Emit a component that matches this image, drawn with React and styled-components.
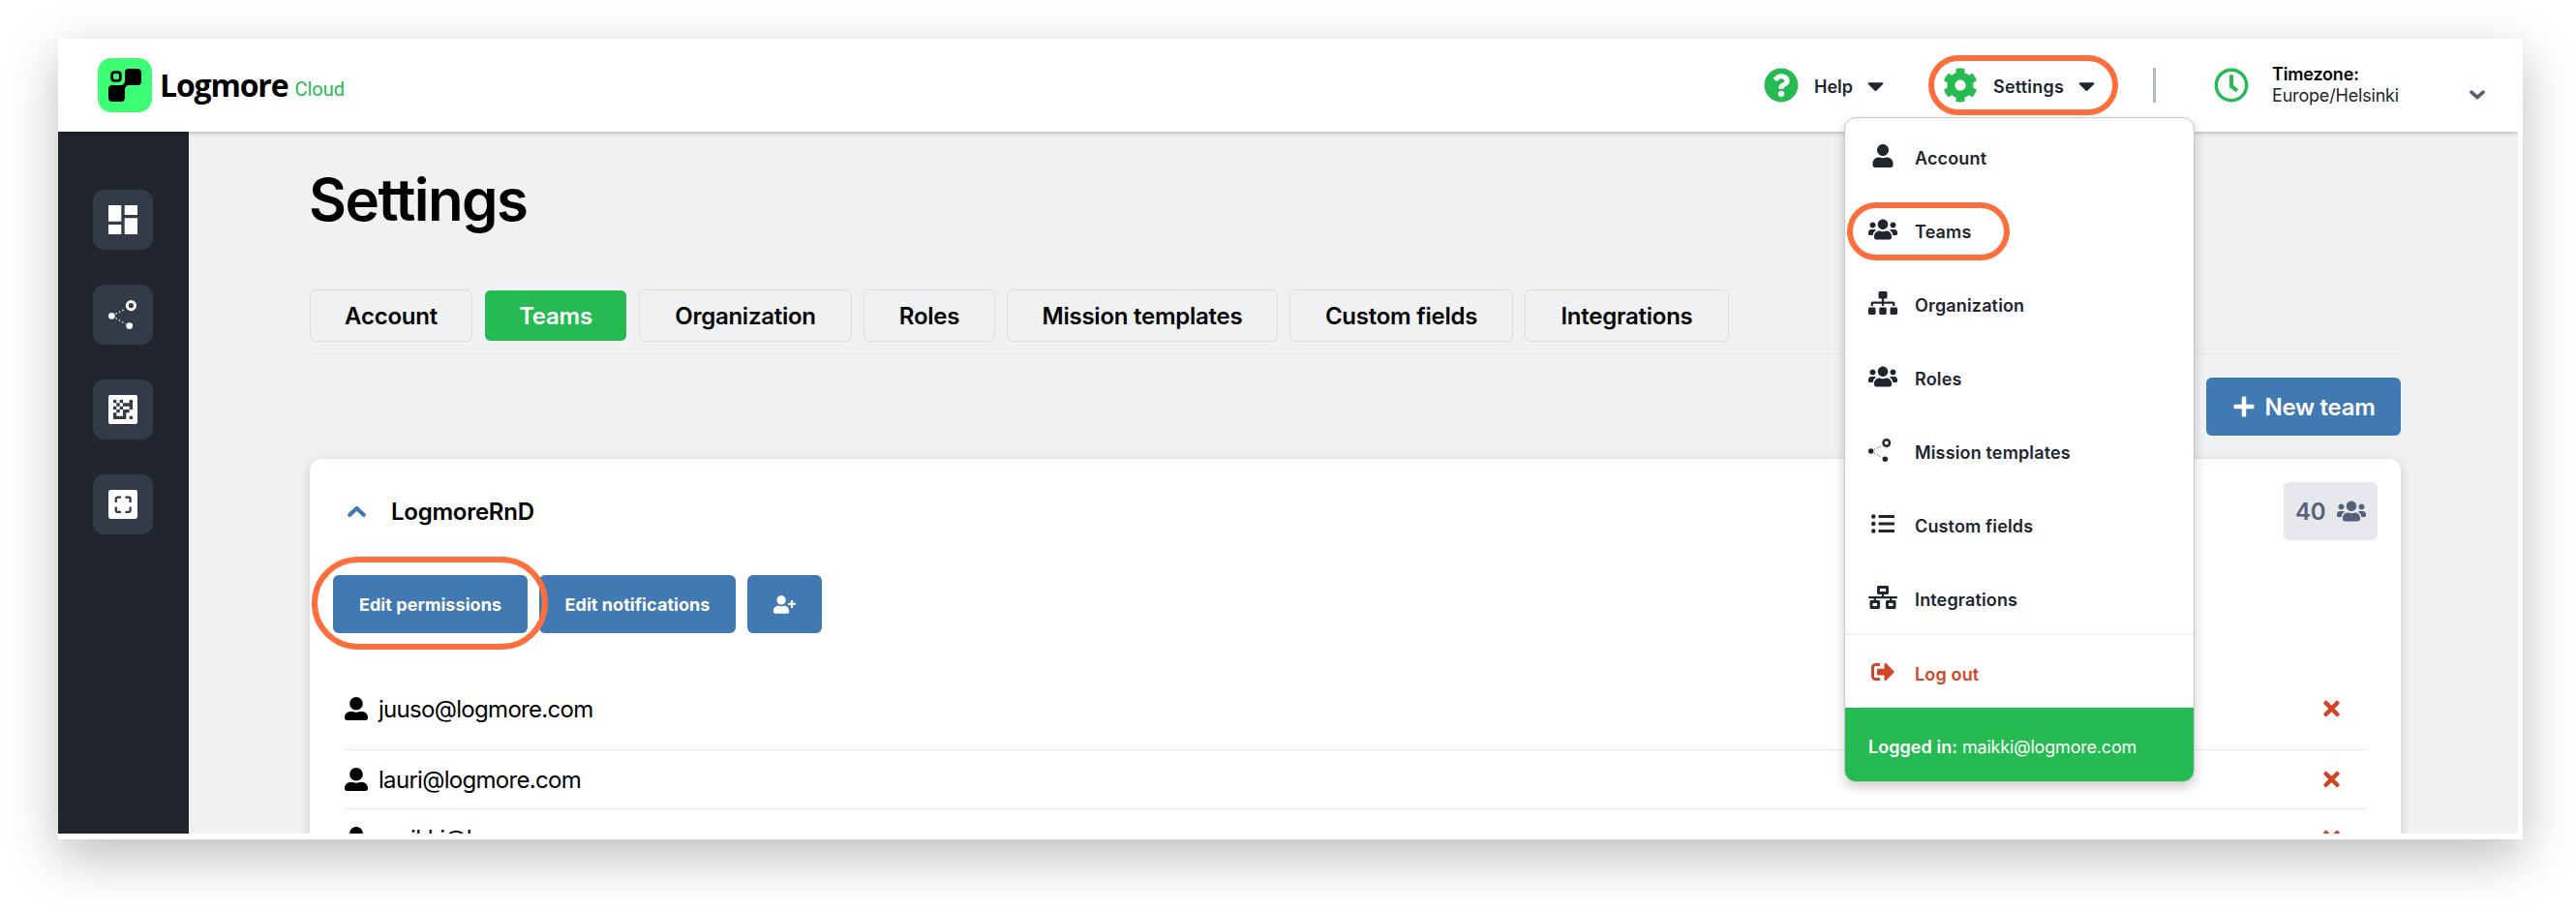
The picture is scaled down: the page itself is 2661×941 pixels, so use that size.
import React from 'react';
import styled, { createGlobalStyle } from 'styled-components';
import {
    FaCaretDown,
    FaCog,
    FaListUl,
    FaNetworkWired,
    FaPlus,
    FaQuestionCircle,
    FaRegClock,
    FaSignOutAlt,
    FaSitemap,
    FaTimes,
    FaUser,
    FaUserAlt,
    FaUserPlus,
    FaUsers,
} from 'react-icons/fa';

const GREEN = '#25ba52';
const BLUE = '#4179b3';
const DARK = '#20252e';
const RED = '#d14424';

const GlobalStyle = createGlobalStyle`
* { box-sizing: border-box; }
body {
    margin: 0;
    background: #fff;
    font-family: Inter, "Liberation Sans", sans-serif;
    color: #000;
}
svg { display: block; flex: none; }
`;

const Page = styled.div`
    width: 2661px;
    height: 941px;
    padding: 40px 55px 0 60px;
    overflow: hidden;
`;

const Frame = styled.div`
    height: 827px;
    padding: 0 5px 6px 0;
    background: #fff;
    box-shadow: 0 18px 50px rgba(0, 0, 0, 0.26);
`;

const Screen = styled.div`
    position: relative;
    display: flex;
    flex-direction: column;
    height: 821px;
    overflow: hidden;
`;

const Header = styled.header`
    position: relative;
    z-index: 1;
    display: flex;
    align-items: center;
    flex: none;
    height: 96px;
    padding: 0 34px 0 41px;
    background: #fff;
    box-shadow: 0 1px 5px rgba(0, 0, 0, 0.28);
`;

const Brand = styled.div`
    display: flex;
    align-items: baseline;
    margin-left: 8px;
    padding-bottom: 1px;
`;

const BrandName = styled.span`
    font: 700 32px/44px "Open Sans", sans-serif;
    letter-spacing: -1.17px;
`;

const BrandSuffix = styled.span`
    margin-left: 7px;
    font: 400 20px/24px Roboto, sans-serif;
    color: ${GREEN};
    transform: translateY(-1px);
`;

const HeaderNav = styled.nav`
    display: flex;
    align-items: center;
    height: 36px;
    margin-left: auto;
    color: ${DARK};
`;

const NavItem = styled.div`
    position: relative;
    display: flex;
    align-items: center;
    width: ${props => props.$width}px;
    height: 36px;
    font-size: 18px;
    font-weight: 600;
    letter-spacing: ${props => props.$spacing || 0}px;

    > svg:first-child {
        color: ${GREEN};
    }
`;

const NavLabel = styled.span`
    padding-top: 2px;
    margin: 0 10px 0 16px;
`;

const Divider = styled.div`
    width: 3px;
    height: 36px;
    margin-right: 60px;
    background: #b4b9c8;
`;

const Timezone = styled.div`
    width: 204px;
    margin-left: 25px;
    font-size: 18px;
    line-height: 22px;
    letter-spacing: -0.18px;

    strong {
        display: block;
        font-weight: 600;
        color: #000;
    }
`;

const ZoneChevron = styled.span`
    padding-top: 21px;
    color: #566179;
`;

const Body = styled.div`
    display: flex;
    flex: 1;
    min-height: 0;
`;

const Sidebar = styled.aside`
    display: flex;
    flex-direction: column;
    align-items: center;
    gap: 36px;
    width: 135px;
    padding: 60px 2px 0 0;
    background: ${DARK};
`;

const SideButton = styled.div`
    display: flex;
    align-items: center;
    justify-content: center;
    width: 62px;
    height: 62px;
    border-radius: 12px;
    background: #333a48;
    color: #fff;
`;

const Main = styled.main`
    flex: 1;
    padding: 34px 121px 0 125px;
    background: #f0f1f3;
`;

const Title = styled.h1`
    margin: 0 0 57px -1px;
    font-size: 60px;
    line-height: 72px;
    font-weight: 600;
    letter-spacing: -1.55px;
`;

const Tabs = styled.div`
    display: flex;
    gap: 12px;
    padding-bottom: 12px;
    border-bottom: 1px solid #e5e6ea;
`;

const Tab = styled.div`
    display: flex;
    align-items: center;
    justify-content: center;
    width: ${props => props.$width}px;
    height: 54px;
    border: 1px solid ${props => (props.$active ? '#f8f9fa' : '#dcdde0')};
    border-radius: 6px;
    background: ${props => (props.$active ? GREEN : 'transparent')};
    background-clip: padding-box;
    color: ${props => (props.$active ? '#fff' : '#000')};
    font-size: 24px;
    font-weight: 600;
    letter-spacing: -0.25px;
`;

const Actions = styled.div`
    display: flex;
    justify-content: flex-end;
    padding: 24px 0;
`;

const Button = styled.div`
    position: relative;
    display: flex;
    align-items: center;
    justify-content: center;
    gap: 10px;
    width: ${props => props.$width}px;
    height: 60px;
    border-radius: 6px;
    background: ${BLUE};
    color: #fff;
    font-size: ${props => (props.$large ? 24 : 18)}px;
    font-weight: ${props => (props.$large ? 600 : 700)};
    letter-spacing: ${props => (props.$large ? -0.3 : 0.06)}px;
`;

const Card = styled.section`
    padding: 24px 24px 0;
    border-radius: 12px;
    background: #fff;
    box-shadow: 0 3px 12px rgba(0, 0, 0, 0.16);
`;

const CardHeader = styled.div`
    display: flex;
    align-items: center;
    height: 60px;
    padding-left: 15px;
    color: ${BLUE};
`;

const TeamName = styled.h2`
    margin: 0 0 0 26px;
    font-size: 24px;
    font-weight: 600;
    letter-spacing: -0.25px;
    color: #000;
`;

const MemberCount = styled.div`
    display: flex;
    align-items: center;
    justify-content: space-between;
    width: 97px;
    height: 60px;
    margin-left: auto;
    padding: 0 12px;
    border-radius: 6px;
    background: #e6e8ee;
    color: #566179;
    font-size: 24px;
    font-weight: 600;
    letter-spacing: -0.2px;
`;

const TeamActions = styled.div`
    display: flex;
    gap: 12px;
    margin: 36px 0;
`;

const MemberList = styled.div`
    padding: 0 12px;
`;

const Member = styled.div`
    display: flex;
    align-items: center;
    gap: 11px;
    height: ${props => (props.$first ? 85 : 61)}px;
    padding-right: 27px;
    border-bottom: 1px solid #e6e8ee;
    font-size: 24px;
    letter-spacing: -0.7px;
`;

const RemoveIcon = styled(FaTimes)`
    margin-left: auto;
    width: 17px;
    height: 24px;
    color: ${RED};
`;

const Menu = styled.div`
    position: absolute;
    z-index: 2;
    top: 81px;
    left: 1845px;
    width: 362px;
    height: 687px;
    border: 1px solid #c5c6c9;
    border-radius: 12px;
    background: #fff;
    box-shadow: 0 5px 12px rgba(0, 0, 0, 0.2);
    overflow: hidden;
`;

const MenuItem = styled.div`
    position: relative;
    display: flex;
    align-items: center;
    gap: 18px;
    height: ${props => (props.$danger ? 77 : 76)}px;
    padding-left: 24px;
    border-top: ${props => (props.$danger ? '2px solid #f0f1f4' : 'none')};
    color: ${props => (props.$danger ? RED : DARK)};
    font-size: 18px;
    font-weight: 600;
    letter-spacing: 0.15px;
`;

const MenuIcon = styled.span`
    display: flex;
    justify-content: ${props => (props.$left ? 'flex-start' : 'center')};
    width: 30px;
    padding-top: 1px;
`;

const MenuLabel = styled.span`
    padding-top: 6px;
`;

const MenuFooter = styled.div`
    height: 78px;
    padding: 30px 24px 0;
    background: ${GREEN};
    color: #fff;
    font-size: 18px;
    line-height: 22px;
    letter-spacing: -0.18px;

    strong {
        font-weight: 600;
        letter-spacing: 0.05px;
    }
`;

// Orange outline that calls out a control
const Highlight = styled.span`
    position: absolute;
    z-index: 3;
    left: ${props => props.$left}px;
    top: ${props => props.$top}px;
    width: ${props => props.$width}px;
    height: ${props => props.$height}px;
    border: 6px solid #ff6f3d;
    border-radius: 48px;
`;

const LogoIcon = () => (
    <svg width="56" height="56" viewBox="0 0 56 56">
        <rect width="56" height="56" rx="14" fill="#3dff76" />
        <rect x="14.7" y="14.7" width="8.6" height="8.6" rx="2.6" fill="none" stroke="#000" strokeWidth="2.8" />
        <path d="M32 11h9a4 4 0 0 1 4 4v9a4 4 0 0 1-4 4h-8.500a4.500 4.500 0 0 0-4.500 4.500V41a4 4 0 0 1-4 4h-9a4 4 0 0 1-4-4v-9a4 4 0 0 1 4-4h8.500a4.500 4.500 0 0 0 4.500-4.500V15a4 4 0 0 1 4-4z" />
    </svg>
);

const DashboardIcon = () => (
    <svg width="30" height="30" viewBox="0 0 30 30" fill="currentColor">
        <path d="M0 0h13.300v16.700H0zM16.700 0H30v10H16.700zM0 20h13.300v10H0zM16.700 13.300H30V30H16.700z" />
    </svg>
);

const MissionIcon = ({ size }) => (
    <svg width={size} height={size} viewBox="0 0 30 30" fill="currentColor">
        <circle cx="3.400" cy="16.300" r="3.400" />
        <circle cx="21.700" cy="26.600" r="3.400" />
        <circle cx="23.400" cy="5.600" r="4.100" fill="none" stroke="currentColor" strokeWidth="3" />
        <path d="M7.500 14.200 17.500 9M7.500 18.600 18 24.600" fill="none" stroke="currentColor" strokeWidth="1.100" strokeDasharray="1.600 2.200" />
    </svg>
);

const CodeIcon = () => (
    <svg width="30" height="30" viewBox="0 0 30 30">
        <rect width="30" height="30" rx="1.800" fill="#fff" />
        <g transform="translate(5 5) scale(3.333)" fill="#333a48">
            <path d="M0 0h1v1H0zM2 0h1v1H2zM5 0h1v3H5zM1 1h1v1H1zM3 1h2v1H3zM0 2h1v1H0zM2 2h1v1H2zM1 3h1v1H1zM3 3h2v1H4v2H0V4h1v1h2zM5 5h1v1H5z" />
        </g>
    </svg>
);

const ScanIcon = () => (
    <svg width="30" height="30" viewBox="0 0 30 30">
        <rect width="30" height="30" rx="2.400" fill="#fff" />
        <path d="M7.800 13V9.200a1.600 1.600 0 0 1 1.600-1.600H13M17.400 7.600H21a1.600 1.600 0 0 1 1.600 1.600V13M22.600 17.400v3.800a1.600 1.600 0 0 1-1.600 1.600h-3.600M13 22.800H9.400a1.600 1.600 0 0 1-1.600-1.600v-3.800" fill="none" stroke="#333a48" strokeWidth="2.300" />
    </svg>
);

const Chevron = ({ width, down }) => (
    <svg width={width} viewBox="0 0 19 12">
        <path d={down ? 'M2.300 2.600 9.500 9 16.700 2.600' : 'M2.300 9.700 9.500 3 16.700 9.700'} fill="none" stroke="currentColor" strokeWidth="4.200" strokeLinecap="round" strokeLinejoin="round" />
    </svg>
);

const tabs = [
    { label: 'Account', width: 168 },
    { label: 'Teams', width: 148, active: true },
    { label: 'Organization', width: 220 },
    { label: 'Roles', width: 136 },
    { label: 'Mission templates', width: 280 },
    { label: 'Custom fields', width: 231 },
    { label: 'Integrations', width: 211 },
];

const menuItems = [
    { label: 'Account', icon: <FaUser size={24} /> },
    { label: 'Teams', icon: <FaUsers size={30} />, highlighted: true },
    { label: 'Organization', icon: <FaSitemap size={30} /> },
    { label: 'Roles', icon: <FaUsers size={30} /> },
    { label: 'Mission templates', icon: <MissionIcon size={24} />, left: true },
    { label: 'Custom fields', icon: <FaListUl size={24} /> },
    { label: 'Integrations', icon: <FaNetworkWired size={30} /> },
    { label: 'Log out', icon: <FaSignOutAlt size={24} />, danger: true },
];

const members = ['juuso@logmore.com', 'lauri@logmore.com', 'maikki@logmore.com'];

const TopBar = () => (
    <Header>
        <LogoIcon />
        <Brand>
            <BrandName>Logmore</BrandName>
            <BrandSuffix>Cloud</BrandSuffix>
        </Brand>
        <HeaderNav>
            <NavItem $width={185}>
                <FaQuestionCircle size={36} />
                <NavLabel>Help</NavLabel>
                <FaCaretDown size={27} />
            </NavItem>
            <NavItem $width={217} $spacing={0.2}>
                <FaCog size={36} />
                <NavLabel>Settings</NavLabel>
                <FaCaretDown size={27} />
                <Highlight $left={-15} $top={-13} $width={196} $height={62} />
            </NavItem>
            <Divider />
            <NavItem $width={35}>
                <FaRegClock size={36} />
            </NavItem>
            <Timezone>
                <strong>Timezone:</strong>
                Europe/Helsinki
            </Timezone>
            <ZoneChevron>
                <Chevron width={16} down />
            </ZoneChevron>
        </HeaderNav>
    </Header>
);

const SettingsMenu = () => (
    <Menu>
        {menuItems.map(item => (
            <MenuItem key={item.label} $danger={item.danger}>
                <MenuIcon $left={item.left}>{item.icon}</MenuIcon>
                <MenuLabel>{item.label}</MenuLabel>
                {item.highlighted && <Highlight $left={2} $top={11} $width={168} $height={60} />}
            </MenuItem>
        ))}
        <MenuFooter>
            <strong>Logged in:</strong> maikki@logmore.com
        </MenuFooter>
    </Menu>
);

const TeamCard = () => (
    <Card>
        <CardHeader>
            <Chevron width={19} />
            <TeamName>LogmoreRnD</TeamName>
            <MemberCount>
                40
                <FaUsers size={30} />
            </MemberCount>
        </CardHeader>
        <TeamActions>
            <Button $width={201}>
                Edit permissions
                <Highlight $left={-22} $top={-19} $width={244} $height={96} />
            </Button>
            <Button $width={203}>Edit notifications</Button>
            <Button $width={77}>
                <FaUserPlus size={23} />
            </Button>
        </TeamActions>
        <MemberList>
            {members.map((email, i) => (
                <Member key={email} $first={i === 0}>
                    <FaUserAlt size={24} />
                    {email}
                    <RemoveIcon />
                </Member>
            ))}
        </MemberList>
    </Card>
);

function App() {
    return (
        <Page>
            <GlobalStyle />
            <Frame>
                <Screen>
                    <TopBar />
                    <Body>
                        <Sidebar>
                            <SideButton><DashboardIcon /></SideButton>
                            <SideButton><MissionIcon size={30} /></SideButton>
                            <SideButton><CodeIcon /></SideButton>
                            <SideButton><ScanIcon /></SideButton>
                        </Sidebar>
                        <Main>
                            <Title>Settings</Title>
                            <Tabs>
                                {tabs.map(tab => (
                                    <Tab key={tab.label} $width={tab.width} $active={tab.active}>{tab.label}</Tab>
                                ))}
                            </Tabs>
                            <Actions>
                                <Button $width={201} $large>
                                    <FaPlus size={24} />
                                    New team
                                </Button>
                            </Actions>
                            <TeamCard />
                        </Main>
                    </Body>
                    <SettingsMenu />
                </Screen>
            </Frame>
        </Page>
    );
}

export default App;
